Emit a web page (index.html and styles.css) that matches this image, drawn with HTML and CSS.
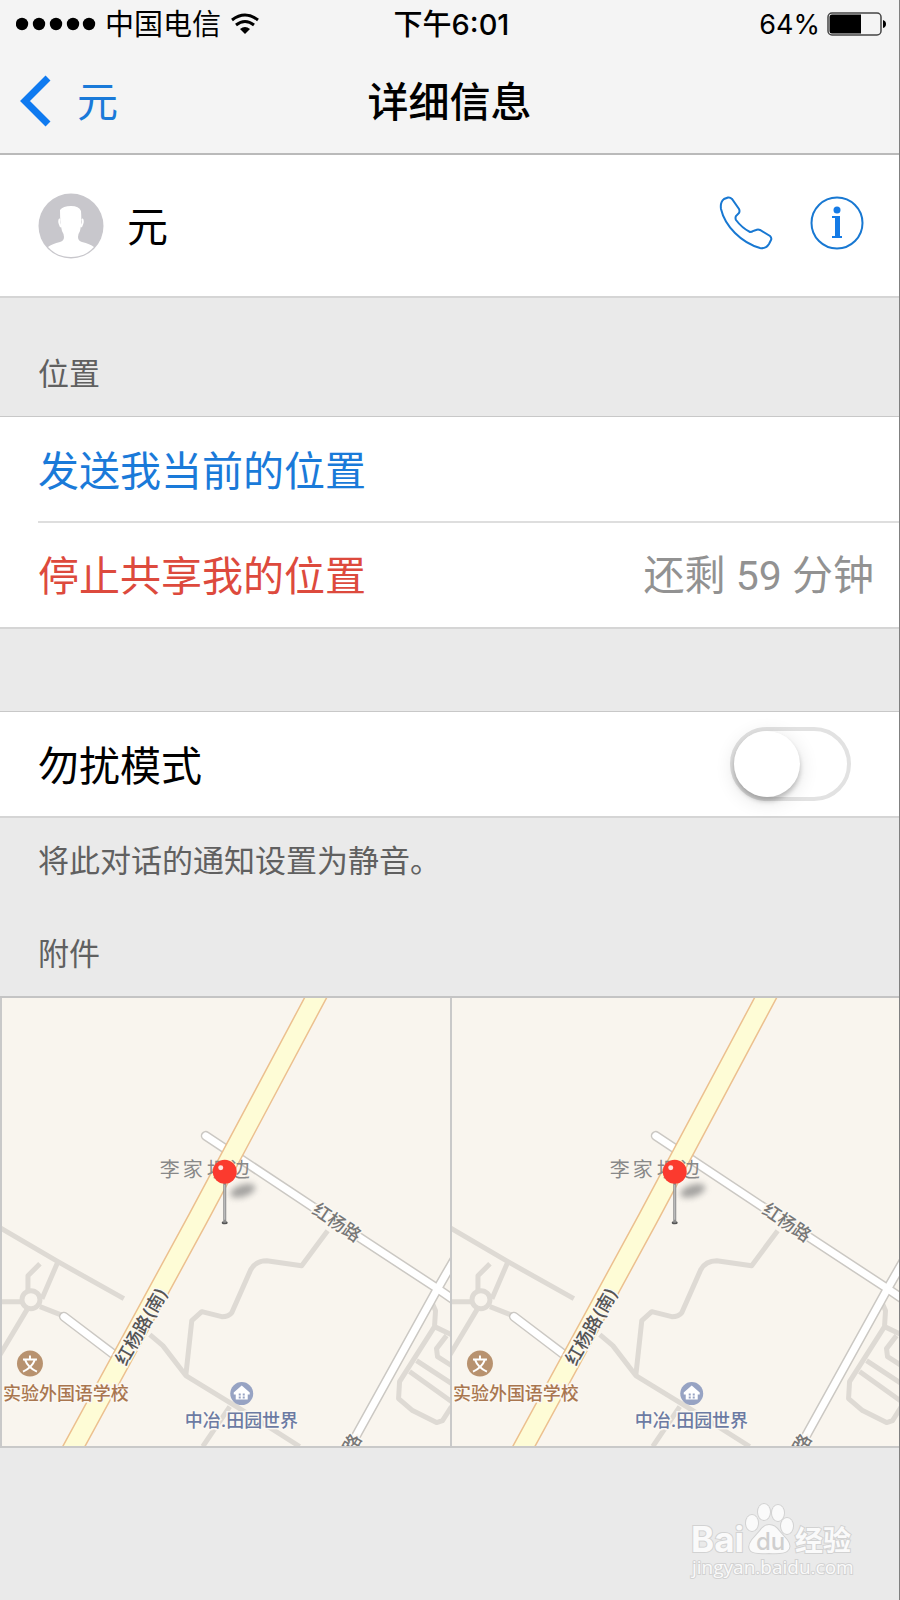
FILE: index.html
```html
<!DOCTYPE html>
<html lang="zh-CN">
<head>
    <meta charset="UTF-8">
    <meta name="viewport" content="width=device-width, initial-scale=1.0">
    <title>详细信息</title>
    <link rel="stylesheet" href="styles.css">
</head>
<body>
    <!-- Shared map drawing, used by both attachments -->
    <svg class="defs" width="0" height="0" aria-hidden="true">
        <defs>
            <filter id="soft" x="-50%" y="-50%" width="200%" height="200%">
                <feGaussianBlur stdDeviation="3"/>
            </filter>
            <g id="roads" fill="none" stroke-linejoin="round">
                <!-- footpaths -->
                <g stroke="#dedad4" stroke-width="5">
                    <path d="M0 231L58 265L124 302M58 265L42 302M40 267L28 279V294M0 305H22M27 313L0 358M40 310L63 319"/>
                    <circle cx="31" cy="303" r="9"/>
                    <path d="M328 234L302 269L267 264Q256 264 251 273L232 316Q229 320 222 320L202 315L192 324L186 379"/>
                    <path d="M150 338L163 349L186 379L240 412L300 450M230 410L203 450"/>
                    <path d="M433 307L436 314L435 330L400 385L399 402L413 414L437 426L443 424L452 410M435 330L452 338M447 339L437 352L438 360L452 369M417 364L452 387M410 375L452 405"/>
                </g>
                <!-- side streets -->
                <g stroke="#cbc8c3" stroke-width="10" stroke-linecap="round">
                    <path d="M206 139L313 210L438 292L460 307M460 254L438 292L345 460M64 320L118 361"/>
                </g>
                <g stroke="#fff" stroke-width="7" stroke-linecap="round">
                    <path d="M206 139L313 210L438 292L460 307M460 254L438 292L345 460M64 320L118 361"/>
                </g>
                <!-- main road -->
                <path d="M327 -20L198 222L63 470" stroke="#ecc08f" stroke-width="21"/>
                <path d="M327 -20L198 222L63 470" stroke="#fefcd6" stroke-width="18"/>
            </g>
            <g id="places">
                <circle cx="30" cy="367" r="13" fill="#b8926f"/>
                <path d="M23 363H37M30 359V363M25 363Q28 371 37 375M35 363Q32 371 23 375" fill="none" stroke="#fff" stroke-width="2"/>
                <circle cx="242" cy="397" r="11.500" fill="#97a3c3"/>
                <path d="M234 396L242 389L250 396V398H248V403H236V398H234Z" fill="#fff"/>
                <path d="M239 397H241V399H239ZM243 397H245V399H243ZM239 400H241V402H239ZM243 400H245V402H243Z" fill="#97a3c3"/>
            </g>
            <g id="pin">
                <ellipse cx="243" cy="194" rx="13" ry="6" fill="#777" opacity=".65" transform="rotate(-18 243 194)" filter="url(#soft)"/>
                <ellipse cx="225" cy="226" rx="3" ry="1.500" fill="#555"/>
                <path d="M225 186V226" stroke="#8c8c8c" stroke-width="3"/>
                <path d="M225 188V223" stroke="#c9c9c9" stroke-width="1"/>
                <circle cx="225" cy="175" r="12" fill="#fb3a2e"/>
                <circle cx="221" cy="171" r="2.500" fill="#ffe3df"/>
            </g>
        </defs>
    </svg>

    <header class="top">
        <div class="status">
            <div class="carrier">
                <svg width="80" height="14" viewBox="0 0 80 14" aria-hidden="true">
                    <circle cx="6" cy="7" r="6.200"/><circle cx="23" cy="7" r="6.200"/><circle cx="40" cy="7" r="6.200"/><circle cx="57" cy="7" r="6.200"/><circle cx="73" cy="7" r="6.200"/>
                </svg>
                <span>中国电信</span>
                <svg class="wifi" width="30" height="22" viewBox="0 0 30 22" aria-hidden="true">
                    <path d="M2 7Q15 -3 28 7" fill="none" stroke="#000" stroke-width="3"/>
                    <path d="M6 12Q15 5 24 12" fill="none" stroke="#000" stroke-width="3"/>
                    <path d="M15 21L10 16Q15 12 20 16Z"/>
                </svg>
            </div>
            <span class="time">下午6:01</span>
            <div class="battery">
                <span>64%</span>
                <svg width="60" height="24" viewBox="0 0 60 24" aria-hidden="true">
                    <rect x="1" y="1" width="53" height="22" rx="4" fill="none" stroke="#444" stroke-width="1.500"/>
                    <path d="M5 2.500H34V21.500H5Q2.500 21.500 2.500 19V5Q2.500 2.500 5 2.500Z"/>
                    <path d="M56 8Q59 9 59 12Q59 15 56 16Z"/>
                </svg>
            </div>
        </div>
        <nav class="nav">
            <a class="back" href="#">
                <svg width="32" height="52" viewBox="0 0 32 52" aria-hidden="true">
                    <path d="M29 3L6 26L29 49" fill="none" stroke="#0f7af0" stroke-width="7"/>
                </svg>
                <span>元</span>
            </a>
            <h1>详细信息</h1>
        </nav>
    </header>

    <main>
        <!-- Contact -->
        <section class="contact">
            <svg class="avatar" width="66" height="66" viewBox="0 0 66 66" aria-hidden="true">
                <circle cx="33" cy="33" r="32.500" fill="#c8c7cc"/>
                <path d="M10 54Q14 51 22 49Q26 48 26 44Q26 41 24 38Q22 31 22 17Q25 13 33 13Q41 13 43 18Q44 31 42 38Q40 41 40 44Q40 48 44 49Q52 51 56 54Q47 64 33 64Q19 64 10 54Z" fill="#fff"/>
                <path d="M22 26Q20 28 23 34M44 26Q46 28 43 34" fill="none" stroke="#fff" stroke-width="2"/>
            </svg>
            <span class="name">元</span>
            <div class="actions">
                <a href="#" aria-label="电话">
                    <svg width="54" height="54" viewBox="0 0 54 54">
                        <path d="M9 1.500Q11 1 13 3L20 13Q21 15 20 17L17 20Q16 22 17 24Q23 32 31 36Q33 36 34 35L37 34Q39 33 41 34L51 40Q53 42 52 44L50 48Q47 53 41 52Q27 48 16 37Q5 26 2 13Q1 6 5 3Z" fill="none" stroke="#1878d2" stroke-width="2"/>
                    </svg>
                </a>
                <button type="button" aria-label="信息">
                    <svg width="54" height="54" viewBox="0 0 54 54">
                        <circle cx="27" cy="27" r="25.500" fill="none" stroke="#1878d2" stroke-width="2"/>
                        <circle cx="27" cy="14" r="3.500" fill="#157be6"/>
                        <path d="M22 20H30V40H32V42H22V40H25V22H22Z" fill="#157be6"/>
                    </svg>
                </button>
            </div>
        </section>

        <!-- Location -->
        <h2>位置</h2>
        <section class="group">
            <button class="row send" type="button">发送我当前的位置</button>
            <button class="row stop" type="button">
                <span>停止共享我的位置</span>
                <span class="left">还剩 59 分钟</span>
            </button>
        </section>

        <!-- Do not disturb -->
        <section class="group quiet">
            <div class="row">
                <label for="dnd">勿扰模式</label>
                <input class="switch" id="dnd" type="checkbox" role="switch">
            </div>
        </section>
        <p class="note">将此对话的通知设置为静音。</p>

        <!-- Attachments -->
        <h2 class="files">附件</h2>
        <section class="maps">
            <a class="map" href="#">
                <svg viewBox="2 1 448 448">
                    <use href="#roads"/>
                    <g class="street">
                        <text x="337" y="232" transform="rotate(34 337 226)">红杨路</text>
                        <text class="dark" x="142" y="336" transform="rotate(-60 142 330)">红杨路(南)</text>
                        <text x="353" y="453" transform="rotate(-60 353 447)">路</text>
                    </g>
                    <text class="village" x="160 183 207 230" y="180">李家坝边</text>
                    <text class="school" x="3" y="403">实验外国语学校</text>
                    <text class="estate" x="185" y="430">中冶.田园世界</text>
                    <use href="#places"/>
                    <use href="#pin"/>
                </svg>
            </a>
            <a class="map" href="#">
                <svg viewBox="2 1 448 448">
                    <use href="#roads"/>
                    <g class="street">
                        <text x="337" y="232" transform="rotate(34 337 226)">红杨路</text>
                        <text class="dark" x="142" y="336" transform="rotate(-60 142 330)">红杨路(南)</text>
                        <text x="353" y="453" transform="rotate(-60 353 447)">路</text>
                    </g>
                    <text class="village" x="160 183 207 230" y="180">李家坝边</text>
                    <text class="school" x="3" y="403">实验外国语学校</text>
                    <text class="estate" x="185" y="430">中冶.田园世界</text>
                    <use href="#places"/>
                    <use href="#pin"/>
                </svg>
            </a>
        </section>
    </main>

    <footer class="mark">
        <svg width="166" height="80" viewBox="0 0 166 80">
            <g class="outline">
                <text class="brand" x="0" y="48">Bai</text>
                <ellipse cx="61" cy="19" rx="6" ry="8"/>
                <ellipse cx="73" cy="8" rx="6" ry="8"/>
                <ellipse cx="87" cy="9" rx="6" ry="8"/>
                <ellipse cx="96" cy="22" rx="6" ry="8"/>
                <path d="M78 21Q84 21 88 27L96 36Q101 43 96 47Q92 50 78 49Q64 50 60 47Q56 43 61 36L69 27Q73 21 78 21Z"/>
                <text class="cn" x="104" y="47">经验</text>
                <text class="url" x="1" y="70">jingyan.baidu.com</text>
            </g>
            <text class="du" x="65" y="46">du</text>
        </svg>
    </footer>
</body>
</html>
```

FILE: styles.css
```css
* {
    box-sizing: border-box;
}

body {
    margin: 0;
    min-height: 100vh;
    display: flex;
    flex-direction: column;
    font-family: Inter, "Noto Sans CJK SC", sans-serif;
    font-size: 41px;
    line-height: 60px;
    color: #000;
    background-color: #eaeaea;
    border-right: 1px solid #808080;
}

a {
    color: inherit;
    text-decoration: none;
}

button {
    font: inherit;
    color: inherit;
    background: none;
    border: none;
    padding: 0;
    text-align: left;
    cursor: pointer;
}

svg {
    display: block;
}

.defs {
    position: absolute;
}

/* status bar and title */
.top {
    background-color: #f4f4f4;
    border-bottom: 2px solid #bababa;
}

.status {
    display: grid;
    grid-template-columns: 1fr auto 1fr;
    align-items: center;
    height: 48px;
    padding: 0 12px 0 16px;
    font-size: 29px;
    line-height: 40px;
}

.carrier span,
.time {
    padding-top: 2px;
}

.carrier,
.battery {
    display: flex;
    align-items: center;
    gap: 9px;
}

.carrier {
    gap: 8px 9px;
}

.battery {
    justify-content: flex-end;
    gap: 7px;
    font-size: 27px;
}

.battery span {
    padding-top: 2px;
}

.time {
    font-weight: 500;
}

.nav {
    display: grid;
    grid-template-columns: 1fr auto 1fr;
    align-items: center;
    height: 105px;
    padding: 0 19px;
}

.nav span,
.nav h1 {
    padding-top: 3px;
}

.back {
    display: flex;
    align-items: center;
    gap: 26px;
    color: #1a7ad9;
}

h1 {
    margin: 0;
    font-size: 41px;
    font-weight: 500;
}

/* contact row */
.contact {
    display: flex;
    align-items: center;
    height: 143px;
    padding: 0 35px 0 38px;
    background-color: #fff;
    border-bottom: 2px solid #d5d5d5;
}

.name {
    flex: 1;
    padding: 2px 0 0 23px;
}

.actions {
    display: flex;
    gap: 37px;
    padding-bottom: 5px;
}

/* grouped rows */
h2,
.note {
    margin: 0;
    padding: 53px 38px 19px;
    font-size: 31px;
    font-weight: 400;
    line-height: 46px;
    color: #606060;
}

.group {
    background-color: #fff;
    border-top: 1px solid #c8c8c8;
    border-bottom: 2px solid #d5d5d5;
}

.row {
    display: flex;
    align-items: center;
    justify-content: space-between;
    width: 100%;
    height: 104px;
    padding: 3px 25px 0 38px;
}

.send {
    color: #1a7ad9;
}

.stop {
    height: 106px;
    color: #dd4a3d;
    background: linear-gradient(#dedede, #dedede) 38px 0 / 100% 2px no-repeat;
}

.left {
    font-family: Roboto, "Noto Sans CJK SC", sans-serif;
    color: #929292;
}

.quiet {
    margin-top: 82px;
}

.quiet .row {
    padding: 0 48px 0 38px;
}

.quiet label {
    padding-top: 3px;
}

/* iOS style switch */
.switch {
    appearance: none;
    width: 121px;
    height: 74px;
    margin: 0;
    border: 4px solid #e2e2e2;
    border-radius: 37px;
    background-color: #fff;
    cursor: pointer;
}

.switch::before {
    content: "";
    display: block;
    width: 66px;
    height: 66px;
    border-radius: 50%;
    background-color: #fff;
    box-shadow: 0 4px 5px rgba(0, 0, 0, .22), 0 4px 20px rgba(0, 0, 0, .12);
}

.switch:checked {
    background-color: #4cd964;
}

.switch:checked::before {
    margin-left: 47px;
}

.note {
    padding-top: 20px;
    padding-bottom: 0;
}

.files {
    padding-top: 47px;
}

/* map thumbnails */
.maps {
    display: flex;
    border-top: 2px solid #c4c4c4;
    border-bottom: 2px solid #c9c9c9;
}

.map {
    flex: 1;
    background-color: #f9f5ee;
    border-left: 2px solid #c9c9c9;
}

.map svg {
    width: 100%;
    height: auto;
}

.map text {
    font-size: 18px;
    font-weight: 500;
    stroke: #fbf8f2;
    stroke-width: 3px;
    paint-order: stroke;
}

.map .street text {
    text-anchor: middle;
    fill: #777;
}

.map .street .dark {
    fill: #555;
}

.map .village {
    font-size: 20px;
    font-weight: 400;
    fill: #888;
    stroke: none;
}

.map .school {
    fill: #a9764f;
}

.map .estate {
    fill: #6c7ba3;
}

/* watermark */
.mark {
    display: flex;
    justify-content: flex-end;
    margin-top: auto;
    padding: 0 42px 16px;
}

.mark svg {
    overflow: visible;
}

.outline {
    fill: #fafafa;
    stroke: #d2d2d2;
    stroke-width: 2px;
    paint-order: stroke;
}

.brand {
    font-size: 35px;
    font-weight: 700;
}

.cn {
    font-size: 28px;
    font-weight: 700;
}

.url {
    font-family: "Open Sans", sans-serif;
    font-size: 19px;
}

.du {
    font-size: 24px;
    font-weight: 500;
    fill: #cfcfcf;
}
```
